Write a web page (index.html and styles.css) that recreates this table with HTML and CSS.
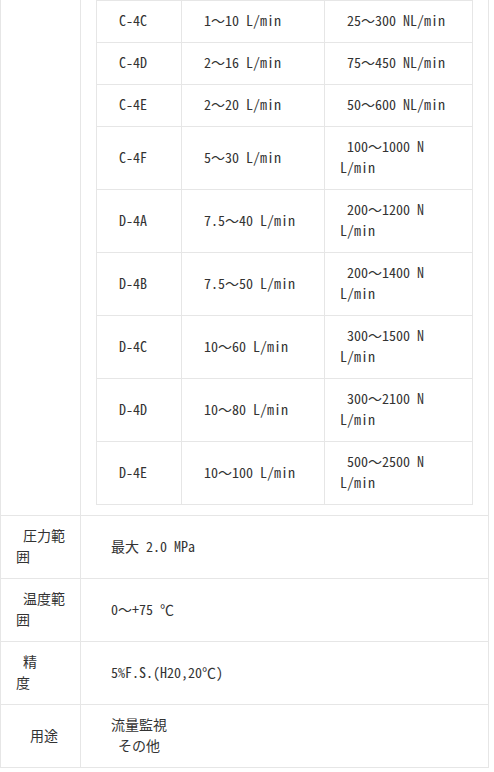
FILE: index.html
```html
<!DOCTYPE html>
<html lang="ja">
<head>
<meta charset="utf-8">
<title>仕様</title>
<link rel="stylesheet" href="styles.css">
</head>
<body>
<div class="spec">
  <div class="row">
    <div class="label"></div>
    <div class="value value-table">
      <div class="flow">
        <div class="c"><span>C-4C</span></div><div class="c"><span>1<span class="w">～</span>10 L/min</span></div><div class="c"><span>25<span class="w">～</span>300 NL/min</span></div>
        <div class="c"><span>C-4D</span></div><div class="c"><span>2<span class="w">～</span>16 L/min</span></div><div class="c"><span>75<span class="w">～</span>450 NL/min</span></div>
        <div class="c"><span>C-4E</span></div><div class="c"><span>2<span class="w">～</span>20 L/min</span></div><div class="c"><span>50<span class="w">～</span>600 NL/min</span></div>
        <div class="c"><span>C-4F</span></div><div class="c"><span>5<span class="w">～</span>30 L/min</span></div><div class="c"><span>100<span class="w">～</span>1000 N<br>L/min</span></div>
        <div class="c"><span>D-4A</span></div><div class="c"><span>7.5<span class="w">～</span>40 L/min</span></div><div class="c"><span>200<span class="w">～</span>1200 N<br>L/min</span></div>
        <div class="c"><span>D-4B</span></div><div class="c"><span>7.5<span class="w">～</span>50 L/min</span></div><div class="c"><span>200<span class="w">～</span>1400 N<br>L/min</span></div>
        <div class="c"><span>D-4C</span></div><div class="c"><span>10<span class="w">～</span>60 L/min</span></div><div class="c"><span>300<span class="w">～</span>1500 N<br>L/min</span></div>
        <div class="c"><span>D-4D</span></div><div class="c"><span>10<span class="w">～</span>80 L/min</span></div><div class="c"><span>300<span class="w">～</span>2100 N<br>L/min</span></div>
        <div class="c"><span>D-4E</span></div><div class="c"><span>10<span class="w">～</span>100 L/min</span></div><div class="c"><span>500<span class="w">～</span>2500 N<br>L/min</span></div>
      </div>
    </div>
  </div>
  <div class="row">
    <div class="label"><span>圧力範<br>囲</span></div>
    <div class="value"><span>最大 2.0 MPa</span></div>
  </div>
  <div class="row">
    <div class="label"><span>温度範<br>囲</span></div>
    <div class="value"><span>0<span class="w">～</span>+75 <span class="w">℃</span></span></div>
  </div>
  <div class="row">
    <div class="label"><span>精<br>度</span></div>
    <div class="value"><span>5%F.S.(H20,20<span class="w">℃</span>)</span></div>
  </div>
  <div class="row">
    <div class="label label-wide"><span>用途</span></div>
    <div class="value"><span>流量監視<span class="sub">その他</span></span></div>
  </div>
</div>
</body>
</html>
```
FILE: styles.css
```css
html, body {
  margin: 0;
  padding: 0;
  background: #ffffff;
}

body {
  color: #333333;
  font-family: "Noto Sans CJK JP", "Noto Sans CJK SC", sans-serif;
  font-size: 14px;
  line-height: 21px;
  font-feature-settings: "hwid" 1;
}

.w {
  font-feature-settings: normal;
}

.spec {
  width: 489px;
  border-left: 1px solid #e6e6e6;
  box-sizing: border-box;
}

.row {
  display: grid;
  grid-template-columns: 80px 408px;
}

.label,
.value {
  box-sizing: border-box;
  border-right: 1px solid #e6e6e6;
  border-bottom: 1px solid #e6e6e6;
  display: flex;
  flex-direction: column;
  justify-content: center;
}

.label {
  padding: 9px 15px 11px;
  text-indent: 7px;
}

.label-wide {
  text-indent: 14px;
}

.value {
  padding: 9px 10px 11px 30px;
  white-space: nowrap;
}

.sub {
  display: block;
  padding-left: 7px;
}

.value-table {
  padding: 0 15px 10px 15px;
  display: block;
}

.flow {
  display: grid;
  grid-template-columns: 85px 143px 148px;
  width: 377px;
  box-sizing: border-box;
  border-left: 1px solid #e6e6e6;
  border-top: 1px solid #e6e6e6;
}

.c {
  box-sizing: border-box;
  border-right: 1px solid #e6e6e6;
  border-bottom: 1px solid #e6e6e6;
  padding: 9px 15px 11px;
  text-indent: 7px;
  white-space: nowrap;
  display: flex;
  flex-direction: column;
  justify-content: center;
}
```
